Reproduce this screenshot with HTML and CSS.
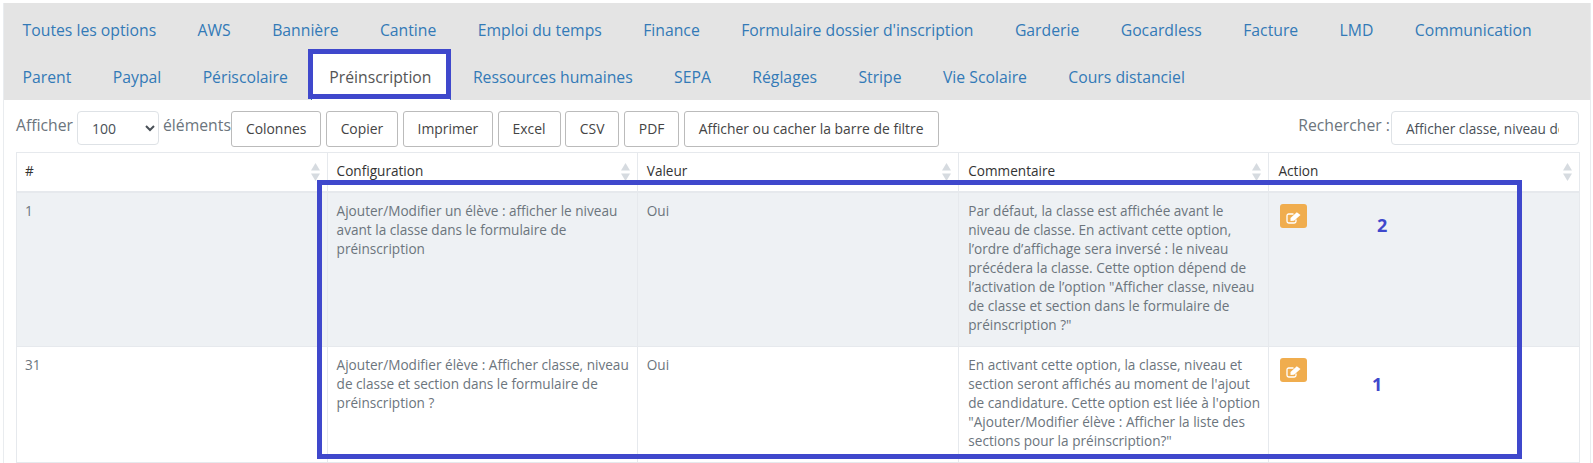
FILE: index.html
```html
<!DOCTYPE html>
<html lang="fr">
<head>
<meta charset="utf-8">
<title>Options</title>
<link rel="stylesheet" href="styles.css">
</head>
<body>
<svg width="0" height="0" class="defs">
  <symbol id="sort" viewBox="0 0 9 18"><path d="M4.500 0 9 7.500H0Z" fill="#d6dbe0"/><path d="M4.500 18 9 10.500H0Z" fill="#d6dbe0"/></symbol>
  <symbol id="edit" viewBox="0 0 15 12"><path d="M10 7.500v1.800A1.700 1.700 0 0 1 8.300 11H2.700A1.700 1.700 0 0 1 1 9.300V3.700A1.700 1.700 0 0 1 2.700 2H7.500" fill="none" stroke="#fff" stroke-width="1.300"/><path d="M4.500 6 10.800 .3 14.500 3 8 8.800 4.500 9Z" fill="#fff"/></symbol>
</svg>
<main class="panel">
  <nav class="tabs">
    <a class="tab">Toutes les options</a><a class="tab">AWS</a><a class="tab">Bannière</a><a class="tab">Cantine</a><a class="tab">Emploi du temps</a><a class="tab">Finance</a><a class="tab">Formulaire dossier d'inscription</a><a class="tab">Garderie</a><a class="tab">Gocardless</a><a class="tab">Facture</a><a class="tab">LMD</a><a class="tab">Communication</a><a class="tab">Parent</a><a class="tab">Paypal</a><a class="tab">Périscolaire</a><a class="tab active">Préinscription</a><a class="tab">Ressources humaines</a><a class="tab">SEPA</a><a class="tab">Réglages</a><a class="tab">Stripe</a><a class="tab">Vie Scolaire</a><a class="tab">Cours distanciel</a>
  </nav>
  <section class="content">
    <div class="toolbar">
      <div class="length">
        <span>Afficher</span>
        <select class="length-select"><option>100</option></select>
        <span>éléments</span>
      </div>
      <div class="buttons">
        <button class="btn">Colonnes</button><button class="btn">Copier</button><button class="btn">Imprimer</button><button class="btn">Excel</button><button class="btn">CSV</button><button class="btn">PDF</button><button class="btn">Afficher ou cacher la barre de filtre</button>
      </div>
      <label class="search">
        <span>Rechercher :</span>
        <input class="search-input" type="text" value="Afficher classe, niveau de classe et section">
      </label>
    </div>
    <table class="grid">
      <colgroup><col class="c1"><col class="c2"><col class="c3"><col class="c4"><col class="c5"></colgroup>
      <thead>
        <tr>
          <th>#<svg class="sort"><use href="#sort"/></svg></th>
          <th>Configuration<svg class="sort"><use href="#sort"/></svg></th>
          <th>Valeur<svg class="sort"><use href="#sort"/></svg></th>
          <th>Commentaire<svg class="sort"><use href="#sort"/></svg></th>
          <th>Action<svg class="sort"><use href="#sort"/></svg></th>
        </tr>
      </thead>
      <tbody>
        <tr class="odd">
          <td>1</td>
          <td>Ajouter/Modifier un élève : afficher le niveau avant la classe dans le formulaire de préinscription</td>
          <td>Oui</td>
          <td>Par défaut, la classe est affichée avant le niveau de classe. En activant cette option, l’ordre d’affichage sera inversé : le niveau précédera la classe. Cette option dépend de l’activation de l’option "Afficher classe, niveau de classe et section dans le formulaire de préinscription ?"</td>
          <td><button class="edit"><svg class="edit-icon"><use href="#edit"/></svg></button></td>
        </tr>
        <tr>
          <td>31</td>
          <td>Ajouter/Modifier élève : Afficher classe, niveau de classe et section dans le formulaire de préinscription ?</td>
          <td>Oui</td>
          <td>En activant cette option, la classe, niveau et section seront affichés au moment de l'ajout de candidature. Cette option est liée à l'option "Ajouter/Modifier élève : Afficher la liste des sections pour la préinscription?"</td>
          <td><button class="edit"><svg class="edit-icon"><use href="#edit"/></svg></button></td>
        </tr>
      </tbody>
    </table>
  </section>
</main>
<div class="mark mark-tab"></div>
<div class="mark mark-rows"></div>
<span class="num num-2">2</span>
<span class="num num-1">1</span>
</body>
</html>
```
FILE: styles.css
```css
* { box-sizing: border-box; }
html, body { margin: 0; height: 463px; overflow: hidden; background: #fff; }
body { font-family: "Open Sans", sans-serif; color: #6c757d; position: relative; padding: 3px 2px 0 3px; }
.defs { position: absolute; }
.panel { border-left: 1px solid #e9ecef; border-right: 1px solid #e9ecef; height: 460px; }
.tabs { display: flex; flex-wrap: wrap; align-content: flex-start; background: #e4e4e4; height: 97px; padding-top: 4px; }
.tab { font-size: 15.750px; line-height: 47px; height: 47px; padding: 0 22.800px 0 18.600px; color: #337ab7; white-space: nowrap; }
.tab.active { background: #fff; color: #555; height: 46px; border: solid #337ab7; border-width: 0 1px; padding: 0 18px 0 17.600px; margin-right: 3.800px; }
.content { padding: 11px 11px 0 12px; }
.toolbar { display: flex; align-items: flex-start; height: 41px; font-size: 15.750px; }
.length { display: flex; gap: 4px; line-height: 28px; }
.length-select { width: 82px; height: 34px; border: 1px solid #dee2e6; border-radius: 4px; background: #fff; font: 14px "Open Sans", sans-serif; color: #495057; padding-left: 10px; }
.buttons { display: flex; gap: 4.300px; }
.btn { height: 35.500px; padding: 0 14px; background: #fff; border: 1px solid #bbb; border-radius: 3px; font: 13.900px "Open Sans", sans-serif; color: #444; }
.search { display: flex; margin-left: auto; gap: 1px; line-height: 28px; }
.search-input { width: 188px; height: 34px; border: 1px solid #dee2e6; border-radius: 4px; font: 13.600px "Open Sans", sans-serif; color: #495057; padding: 0 19px 0 14px; }
.grid { border-collapse: collapse; table-layout: fixed; width: 1563px; font-size: 13.600px; line-height: 19px; }
.c1 { width: 310.600px; } .c2 { width: 310.200px; } .c3 { width: 321.500px; } .c4 { width: 310.200px; } .c5 { width: 310.500px; }
th { position: relative; height: 39px; padding: 0 10px 2px 9px; border: 1px solid #e6e9ed; border-bottom-width: 2px; text-align: left; font-weight: 400; color: #333; }
td { padding: 8px 6px 12px 9px; border: 1px solid #e6e9ed; vertical-align: top; color: #6c757d; }
td:nth-child(4) { padding-right: 1px; }
th:first-child, td:first-child { padding-left: 8px; }
.odd td { background: #eef1f4; }
.sort { position: absolute; right: 7px; top: 10px; width: 9px; height: 18px; }
.edit { display: block; width: 27px; height: 24px; margin: 3px 0 0 2px; border: 0; border-radius: 3px; background: #f0ad4e; padding: 0; }
.edit-icon { display: block; width: 15px; height: 12px; margin: 5px 0 0 6px; }
.mark { position: absolute; border: 5px solid #3f48cc; }
.mark-tab { left: 308px; top: 49px; width: 143px; height: 50px; }
.mark-rows { left: 317px; top: 180px; width: 1205px; height: 279px; }
.num { position: absolute; color: #3f48cc; font-weight: 700; font-size: 18px; line-height: 20px; }
.num-2 { left: 1377px; top: 215px; }
.num-1 { left: 1372px; top: 374px; }
```
